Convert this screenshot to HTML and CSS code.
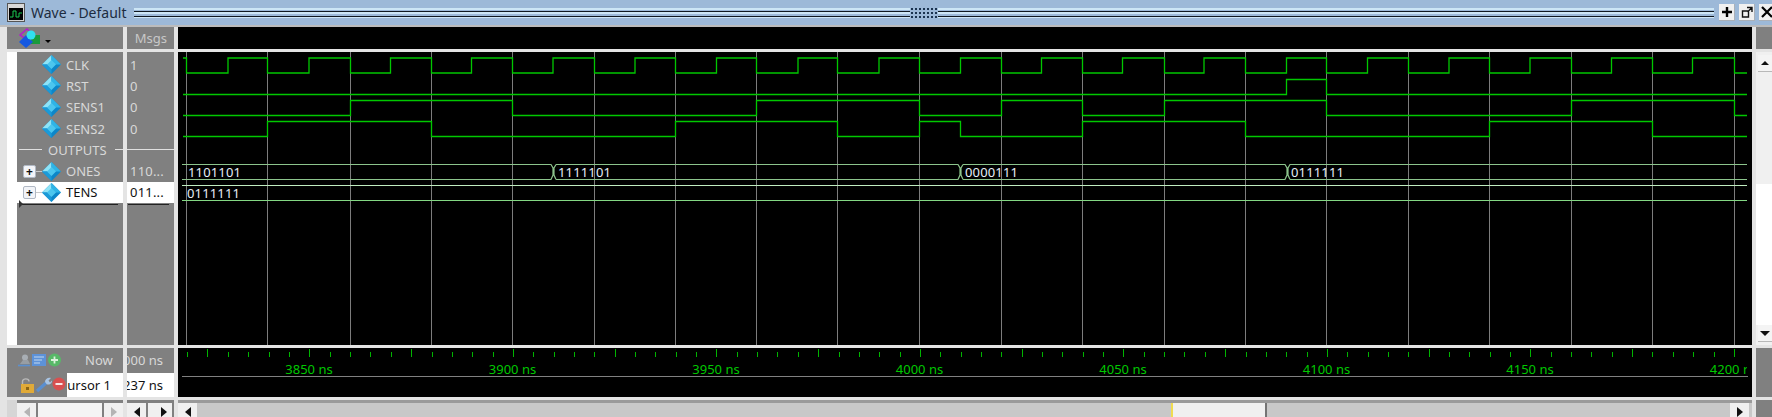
FILE: index.html
```html
<!DOCTYPE html>
<html lang="en">
<head>
    <meta charset="UTF-8">
    <title>Wave - Default</title>
    <link rel="stylesheet" href="styles.css">
</head>
<body>
    <svg class="defs" width="0" height="0">
        <symbol id="signal" viewBox="0 0 19 19">
            <polygon points="9.5,0 19,9.5 9.5,19 0,9.5" fill="#0c86c8"/>
            <polygon points="9.5,0 0,9.5 9.5,9.5" fill="#8fe4f7"/>
            <polygon points="9.5,0 19,9.5 9.5,9.5" fill="#2fb4e6"/>
            <polygon points="0,9.5 9.5,19 9.5,9.5" fill="#1b9ad8"/>
            <polygon points="9.5,5 14,9.5 9.5,14 5,9.5" fill="#4cc6ee"/>
        </symbol>
    </svg>

    <div class="titlebar">
        <svg class="app-icon" width="18" height="19" viewBox="0 0 18 19">
            <rect x="0.5" y="0.5" width="17" height="18" fill="#d8d8d8" stroke="#555"/>
            <rect x="2" y="5" width="14" height="12" fill="#000"/>
            <path d="M3 14H6V8H9V14H12V10H15" fill="none" stroke="#19c850"/>
        </svg>
        <span class="title-text">Wave - Default</span>
        <div class="grip"></div>
        <div class="grip-dots"></div>
        <div class="grip"></div>
        <div class="title-buttons">
            <button class="title-btn">
                <svg width="12" height="12" viewBox="0 0 12 12"><path d="M6 1V11M1 6H11" stroke="#000" stroke-width="2.4"/></svg>
            </button>
            <button class="title-btn">
                <svg width="12" height="12" viewBox="0 0 12 12"><path d="M1.5 5H7.5V11H1.5ZM6 1.5H11V6M11 1.5L6.5 6" fill="none" stroke="#111" stroke-width="1.4"/></svg>
            </button>
            <button class="title-btn">
                <svg width="12" height="12" viewBox="0 0 12 12"><path d="M1 1L11 11M11 1L1 11" stroke="#000" stroke-width="2.2"/></svg>
            </button>
        </div>
    </div>

    <div class="panes">
        <!-- header row -->
        <div class="names-head">
            <svg width="22" height="21" viewBox="0 0 22 21">
                <polygon points="8,1 15,7 8,12 1,7" fill="none" stroke="#b020c8" stroke-width="1.6"/>
                <rect x="12" y="7" width="9" height="9" fill="#1a9a3c"/>
                <polygon points="7,7 14,14 7,20 0,14" fill="#1558e0"/>
                <circle cx="12" cy="7" r="4.5" fill="#30e0f0"/>
            </svg>
            <span class="caret"></span>
        </div>
        <div class="msgs-head">Msgs</div>
        <div class="wave-head"></div>
        <div class="side-cell"></div>

        <!-- signal names, values and waves -->
        <div class="names">
            <div class="row"><span class="tree"></span><svg class="diamond"><use href="#signal"/></svg><span>CLK</span></div>
            <div class="row"><span class="tree"></span><svg class="diamond"><use href="#signal"/></svg><span>RST</span></div>
            <div class="row"><span class="tree"></span><svg class="diamond"><use href="#signal"/></svg><span>SENS1</span></div>
            <div class="row"><span class="tree"></span><svg class="diamond"><use href="#signal"/></svg><span>SENS2</span></div>
            <div class="row divider"><span>OUTPUTS</span></div>
            <div class="row"><span class="tree"><span class="expander">+</span><i class="branch"></i></span><svg class="diamond"><use href="#signal"/></svg><span>ONES</span></div>
            <div class="row selected"><span class="tree"><span class="expander">+</span><i class="branch"></i></span><svg class="diamond"><use href="#signal"/></svg><span>TENS</span></div>
            <div class="drop-line"></div>
        </div>
        <div class="values">
            <div class="row">1</div>
            <div class="row">0</div>
            <div class="row">0</div>
            <div class="row">0</div>
            <div class="row divider-value"></div>
            <div class="row">110...</div>
            <div class="row selected">011...</div>
            <div class="drop-line"></div>
        </div>
        <svg class="wave" width="1574" height="293" viewBox="178 52 1574 293">
            <path class="gridline" d="M186.5 52V345M267.5 52V345M350.5 52V345M431.5 52V345M512.5 52V345M594.5 52V345M675.5 52V345M756.5 52V345M837.5 52V345M919.5 52V345M1001.5 52V345M1082.5 52V345M1164.5 52V345M1245.5 52V345M1326.5 52V345M1408.5 52V345M1489.5 52V345M1571.5 52V345M1652.5 52V345M1734.5 52V345"/>
            <!-- CLK -->
            <path class="sig" d="M183 58H186.5V73H228V58H267.5V73H309V58H350.5V73H390.5V58H431.5V73H471.5V58H512.5V73H553V58H594.5V73H635V58H675.5V73H716.5V58H756.5V73H798V58H837.5V73H879V58H919.5V73H960.5V58H1001.5V73H1041.5V58H1082.5V73H1122.5V58H1164.5V73H1204V58H1245.5V73H1286.5V58H1326.5V73H1367.5V58H1408.5V73H1449V58H1489.5V73H1530V58H1571.5V73H1611.5V58H1652.5V73H1692.5V58H1734.5V73H1747"/>
            <!-- RST -->
            <path class="sig" d="M183 94.5H1286.5V79.5H1326.5V94.5H1747"/>
            <!-- SENS1 -->
            <path class="sig" d="M183 115.5H350.5V100.5H512.5V115.5H756.5V100.5H919.5V115.5H1001.5V100.5H1082.5V115.5H1164.5V100.5H1326.5V115.5H1571.5V100.5H1734.5V115.5H1747"/>
            <!-- SENS2 -->
            <path class="sig" d="M183 136.5H267.5V121.5H431.5V136.5H675.5V121.5H837.5V136.5H919.5V121.5H960.5V136.5H1082.5V121.5H1245.5V136.5H1489.5V121.5H1652.5V136.5H1747"/>
            <!-- ONES -->
            <path class="bus" d="M182 164.5H551L553 168V175L551 179.5H182M556 179.5L554 175V168L556 164.5"/>
            <path class="bus" d="M556 164.5H958L960 168V175L958 179.5H556M963 179.5L961 175V168L963 164.5"/>
            <path class="bus" d="M963 164.5H1285L1287 168V175L1285 179.5H963M1290 179.5L1288 175V168L1290 164.5H1747M1290 179.5H1747"/>
            <text class="bus-label" x="188" y="177">1101101</text>
            <text class="bus-label" x="558" y="177">1111101</text>
            <text class="bus-label" x="965" y="177">0000111</text>
            <text class="bus-label" x="1291" y="177">0111111</text>
            <!-- TENS -->
            <path class="bus-top" d="M182 185.5H1747"/>
            <path class="bus-bottom" d="M182 200.5H1747"/>
            <text class="bus-label" x="187" y="198">0111111</text>
        </svg>
        <div class="side-scroll">
            <div class="side-btn"><span class="tri tri-up"></span></div>
            <div class="side-track"></div>
            <div class="side-btn"><span class="tri tri-down"></span></div>
        </div>

        <!-- now / cursor row -->
        <div class="names-foot">
            <div class="foot-row">
                <svg class="foot-icons" width="46" height="15" viewBox="0 0 46 15">
                    <circle cx="7" cy="4.5" r="3" fill="#a8aeb4"/>
                    <path d="M2 11L5 7H10L12 11Z" fill="#989ea4"/>
                    <path d="M0 12.5H12" stroke="#5a8fd0" stroke-width="1.6"/>
                    <rect x="14" y="1" width="14" height="12" fill="#5d92d8"/>
                    <path d="M16 4H26M16 7H24M16 10H22" stroke="#c4d8ee"/>
                    <circle cx="36.5" cy="7" r="6.5" fill="#58b868"/>
                    <path d="M33 7H40M36.5 3.5V10.5" stroke="#dcf0dc" stroke-width="1.8"/>
                </svg>
                <span class="now-label">Now</span>
            </div>
            <div class="foot-row">
                <svg class="foot-icons icons-low" width="46" height="16" viewBox="0 0 46 16">
                    <path d="M1.5 7V4.5C1.5 1 8 1 8 4.5" fill="none" stroke="#b8b8b8" stroke-width="1.4"/>
                    <rect x="0" y="7" width="13" height="9" fill="#e0aa38"/>
                    <rect x="5" y="10" width="3" height="3" fill="#8a6414"/>
                    <path d="M16 14L25 6" stroke="#5a8fd0" stroke-width="3.2"/>
                    <path d="M24 5C24 2 27 0 30 1L27.5 3.5L29 5.5L31 3.5C31.5 6.5 28 8.5 25.5 7Z" fill="#a8c4e4"/>
                    <circle cx="38" cy="7" r="6.5" fill="#d85050"/>
                    <path d="M34.5 7H41.5" stroke="#f8e8e8" stroke-width="2"/>
                </svg>
                <span class="cursor-name"><span>Cursor 1</span></span>
            </div>
        </div>
        <div class="values-foot">
            <div class="foot-value"><span>4000 ns</span></div>
            <div class="foot-value cursor-value"><span>4237 ns</span></div>
        </div>
        <svg class="ruler" width="1574" height="49" viewBox="178 348 1574 49">
            <defs>
                <clipPath id="ruler-clip"><rect x="178" y="348" width="1569" height="49"/></clipPath>
            </defs>
            <path class="tick" d="M187.5 352V357M228.5 352V357M248.5 352V357M269.5 352V357M289.5 352V357M330.5 352V357M350.5 352V357M370.5 352V357M391.5 352V357M432.5 352V357M452.5 352V357M472.5 352V357M493.5 352V357M533.5 352V357M554.5 352V357M574.5 352V357M594.5 352V357M635.5 352V357M655.5 352V357M676.5 352V357M696.5 352V357M737.5 352V357M757.5 352V357M777.5 352V357M798.5 352V357M839.5 352V357M859.5 352V357M879.5 352V357M900.5 352V357M940.5 352V357M961.5 352V357M981.5 352V357M1001.5 352V357M1042.5 352V357M1062.5 352V357M1083.5 352V357M1103.5 352V357M1144.5 352V357M1164.5 352V357M1184.5 352V357M1205.5 352V357M1246.5 352V357M1266.5 352V357M1286.5 352V357M1307.5 352V357M1347.5 352V357M1368.5 352V357M1388.5 352V357M1408.5 352V357M1449.5 352V357M1469.5 352V357M1490.5 352V357M1510.5 352V357M1551.5 352V357M1571.5 352V357M1591.5 352V357M1612.5 352V357M1652.5 352V357M1673.5 352V357M1693.5 352V357M1714.5 352V357"/>
            <path class="tick" d="M207.5 349V357M309.5 349V357M411.5 349V357M513.5 349V357M615.5 349V357M716.5 349V357M818.5 349V357M920.5 349V357M1022.5 349V357M1123.5 349V357M1225.5 349V357M1327.5 349V357M1429.5 349V357M1530.5 349V357M1632.5 349V357M1734.5 349V357"/>
            <path class="ruler-line" d="M182 376.5H1748"/>
            <g class="ruler-labels" clip-path="url(#ruler-clip)">
                <text x="309" y="374">3850 ns</text>
                <text x="512.5" y="374">3900 ns</text>
                <text x="716" y="374">3950 ns</text>
                <text x="919.5" y="374">4000 ns</text>
                <text x="1123" y="374">4050 ns</text>
                <text x="1326.5" y="374">4100 ns</text>
                <text x="1530" y="374">4150 ns</text>
                <text x="1733.5" y="374">4200 ns</text>
            </g>
        </svg>
        <div class="side-cell"></div>

        <!-- horizontal scroll bars -->
        <div class="hscroll hscroll-names">
            <div class="scroll-btn"><span class="tri tri-left faint"></span></div>
            <div class="dotted-track"></div>
            <div class="scroll-btn"><span class="tri tri-right faint"></span></div>
        </div>
        <div class="hscroll hscroll-values">
            <div class="scroll-btn"><span class="tri tri-left"></span></div>
            <div class="scroll-btn wide"><span class="tri tri-right"></span></div>
        </div>
        <div class="hscroll hscroll-wave">
            <div class="scroll-btn"><span class="tri tri-left"></span></div>
            <div class="track-before"></div>
            <div class="thumb"></div>
            <div class="track-after"></div>
            <div class="scroll-btn"><span class="tri tri-right"></span></div>
        </div>
        <div class="side-cell"></div>
    </div>
</body>
</html>
```

FILE: styles.css
```css
* {
    margin: 0;
    padding: 0;
    box-sizing: border-box;
}

body {
    width: 1772px;
    height: 417px;
    overflow: hidden;
    font-family: 'Noto Sans', sans-serif;
    font-size: 13px;
    background: #d6d6d6;
}

.defs {
    position: absolute;
}

/* title bar */
.titlebar {
    height: 25px;
    display: flex;
    align-items: center;
    padding-left: 7px;
    background: #9db9d8;
}

.app-icon {
    flex: none;
}

.title-text {
    margin-left: 6px;
    margin-right: 7px;
    font-size: 14px;
    color: #1c2c40;
    white-space: nowrap;
}

.grip {
    flex: 1;
    height: 10px;
    background: linear-gradient(to bottom, #cde6f6 0 2px, #9db9d8 2px 3px, #101820 3px 4px, #cde6f6 4px 6px, #9db9d8 6px 8px, #101820 8px 9px, #cde6f6 9px 10px);
}

.grip-dots {
    width: 28px;
    height: 12px;
    background-image: radial-gradient(circle, #1c3450 0.9px, transparent 1.2px);
    background-size: 4px 4px;
}

.title-buttons {
    display: flex;
    gap: 4px;
    margin-left: 5px;
    width: 53px;
    overflow: hidden;
}

.title-btn {
    flex: none;
    width: 16px;
    height: 17px;
    display: flex;
    align-items: center;
    justify-content: center;
    background: #f0f0f0;
    border: none;
    border-right: 1px solid #aab0b8;
    border-bottom: 1px solid #aab0b8;
}

/* panes */
.panes {
    height: 392px;
    display: grid;
    grid-template-columns: 116px 47px 1574px 16px;
    grid-template-rows: 22px 293px 49px 17px;
    column-gap: 4px;
    row-gap: 3px;
    padding-left: 7px;
    padding-top: 2px;
    background: #e4e4e4;
    box-shadow: inset 0 2px 0 #bcbcbc;
}

.names-head {
    display: flex;
    align-items: center;
    padding-left: 12px;
    background: #808080;
}

.caret {
    width: 0;
    height: 0;
    margin-left: 4px;
    margin-top: 7px;
    border-left: 3px solid transparent;
    border-right: 3px solid transparent;
    border-top: 3px solid #000;
}

.msgs-head {
    padding: 2px 7px 0 0;
    text-align: right;
    color: #c8c8c8;
    background: #808080;
}

.wave-head {
    background: #000;
}

.side-cell {
    background: #808080;
}

/* signal list */
.names {
    position: relative;
    padding-top: 2px;
    padding-left: 10px;
    background: linear-gradient(to right, #fff 10px, #808080 10px);
    color: #d8d8d8;
}

.values {
    position: relative;
    padding-top: 2px;
    background: #808080;
    color: #d8d8d8;
}

.row {
    height: 21.3px;
    display: flex;
    align-items: center;
    white-space: nowrap;
}

.values .row {
    padding-left: 3px;
    letter-spacing: 0.2px;
}

.row.selected {
    background: #fff;
    color: #111;
}

.tree {
    flex: none;
    width: 25px;
    display: flex;
    align-items: center;
    padding-left: 6px;
}

.expander {
    flex: none;
    width: 13px;
    height: 13px;
    display: block;
    font-size: 12px;
    font-weight: 700;
    line-height: 11px;
    text-align: center;
    color: #111;
    background: #f2f4f8;
    border: 1px solid #b0b8c4;
    border-radius: 2px;
}

.branch {
    flex: none;
    width: 6px;
    height: 1px;
    background: #c8c8c8;
}

.diamond {
    flex: none;
    width: 19px;
    height: 19px;
    margin-right: 5px;
}

.divider {
    padding-left: 2px;
    gap: 6px;
}

.divider::before {
    content: "";
    width: 23px;
    height: 1px;
    background: #e0e0e0;
}

.divider::after {
    content: "";
    flex: 1;
    height: 1px;
    margin-left: 2px;
    background: #e0e0e0;
}

.divider-value {
    position: relative;
}

.divider-value::after {
    content: "";
    position: absolute;
    left: 0;
    right: 0;
    top: 10px;
    height: 1px;
    background: #e0e0e0;
}

.drop-line {
    position: absolute;
    top: 152px;
    left: 13px;
    width: 98px;
    height: 1px;
    background: #222;
}

.names .drop-line::before {
    content: "";
    position: absolute;
    left: -1px;
    top: -4px;
    border-top: 4px solid transparent;
    border-bottom: 4px solid transparent;
    border-left: 4px solid #333;
}

.values .drop-line {
    left: 1px;
    width: 41px;
}

/* wave area */
.wave,
.ruler {
    display: block;
    background: #000;
}

.gridline {
    fill: none;
    stroke: #7c7c7c;
    stroke-width: 1;
}

.sig {
    fill: none;
    stroke: #00c800;
    stroke-width: 1.3;
}

.bus {
    fill: none;
    stroke: #8cc48c;
    stroke-width: 1.2;
}

.bus-top {
    fill: none;
    stroke: #c0ecc0;
    stroke-width: 1.2;
}

.bus-bottom {
    fill: none;
    stroke: #84d884;
    stroke-width: 1.2;
}

.bus-label {
    font-size: 13px;
    letter-spacing: 0.15px;
    fill: #e6eef8;
}

.tick {
    fill: none;
    stroke: #00b400;
}

.ruler-line {
    fill: none;
    stroke: #808080;
}

.ruler-labels {
    font-size: 13px;
    fill: #00c800;
    text-anchor: middle;
}

/* vertical scroll bar */
.side-scroll {
    display: flex;
    flex-direction: column;
    padding: 3px 0;
    background: #f0f0f0;
}

.side-btn {
    height: 17px;
    margin-left: 2px;
    display: flex;
    align-items: center;
    justify-content: center;
    background: #f4f4f4;
    border-bottom: 1px solid #b8b8b8;
}

.side-track {
    flex: 1;
    background: linear-gradient(to bottom, #f0f0f0 0 112px, #fff 112px);
}

/* footer of the name and value panes */
.names-foot {
    display: flex;
    flex-direction: column;
    background: #808080;
    color: #d8d8d8;
}

.foot-row {
    flex: 1;
    display: flex;
    align-items: center;
    padding-left: 11px;
}

.foot-icons {
    flex: none;
}

.now-label {
    margin-left: 21px;
}

.icons-low {
    margin-left: 3px;
}

.cursor-name {
    flex: none;
    align-self: stretch;
    width: 56px;
    padding-right: 12px;
    display: flex;
    align-items: center;
    justify-content: flex-end;
    overflow: hidden;
    white-space: nowrap;
    color: #111;
    background: #fff;
}

.cursor-name span {
    flex: none;
}

.values-foot {
    display: flex;
    flex-direction: column;
    background: #808080;
    color: #d8d8d8;
}

.foot-value {
    flex: 1;
    display: flex;
    align-items: center;
    justify-content: flex-end;
    padding-right: 11px;
    overflow: hidden;
    white-space: nowrap;
}

.foot-value span {
    flex: none;
}

.cursor-value {
    color: #111;
    background: #fff;
}

/* horizontal scroll bars */
.hscroll {
    display: flex;
    align-items: stretch;
    padding-top: 3px;
    background: #808080;
}

.hscroll-names {
    padding-left: 10px;
    background: linear-gradient(to right, #d6d6d6 10px, #808080 10px);
}

.hscroll-values {
    gap: 2px;
}

.scroll-btn {
    flex: none;
    width: 19px;
    padding-top: 3px;
    display: flex;
    align-items: center;
    justify-content: center;
    background: #f0f0f0;
}

.scroll-btn.wide {
    width: 24px;
    padding-left: 8px;
}

.dotted-track {
    flex: 1;
    margin: 0 2px;
    background-color: #f4f4f4;
    background-image: radial-gradient(circle, #c8c8c8 0.5px, transparent 0.7px);
    background-size: 2px 2px;
}

.hscroll-wave {
    padding-right: 3px;
    background: linear-gradient(to bottom, #9a9a9a 3px, #c8c8c8 3px);
}

.track-before {
    width: 974px;
}

.track-after {
    flex: 1;
}

.thumb {
    width: 96px;
    background: #f0f0f0;
    border-left: 2px solid #f0dc50;
    border-right: 2px solid #747474;
}

/* scroll arrows */
.tri {
    width: 0;
    height: 0;
    display: block;
}

.tri-left {
    border-top: 5px solid transparent;
    border-bottom: 5px solid transparent;
    border-right: 6px solid #111;
}

.tri-right {
    border-top: 5px solid transparent;
    border-bottom: 5px solid transparent;
    border-left: 6px solid #111;
}

.tri-up {
    border-left: 4px solid transparent;
    border-right: 4px solid transparent;
    border-bottom: 4px solid #111;
}

.tri-down {
    border-left: 5px solid transparent;
    border-right: 5px solid transparent;
    border-top: 5px solid #111;
}

.tri-left.faint {
    border-right-color: #b4b4b4;
}

.tri-right.faint {
    border-left-color: #b4b4b4;
}
```
